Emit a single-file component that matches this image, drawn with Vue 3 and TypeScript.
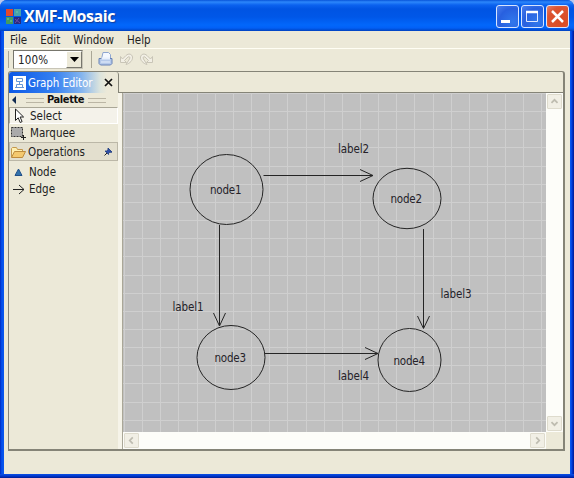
<script setup lang="ts">
interface GraphNode { id: string; cx: number; cy: number; rx: number; ry: number; tx: number; ty: number }
interface GraphEdge { id: string; line: string; head: string; tx: number; ty: number }

const menus: string[] = ['File', 'Edit', 'Window', 'Help']

const step = 18.15
const gridPath: string = [
  ...Array.from({ length: 24 }, (_, i) => `M${Math.round(1 + i * step) + 0.5} 0V339`),
  ...Array.from({ length: 19 }, (_, i) => `M0 ${Math.round(i * step) + 0.5}H423`),
].join('')

// Canvas coordinates; the origin is the top left corner of the drawing area.
const nodes: GraphNode[] = [
  { id: 'node1', cx: 103.5, cy: 96.5, rx: 36.5, ry: 35, tx: 87, ty: 101 },
  { id: 'node2', cx: 284, cy: 105.5, rx: 34, ry: 30.2, tx: 267.5, ty: 110 },
  { id: 'node3', cx: 108, cy: 264.5, rx: 34, ry: 32, tx: 91.5, ty: 269 },
  { id: 'node4', cx: 286.5, cy: 267, rx: 31.5, ry: 31.5, tx: 270.5, ty: 271.5 },
]
const edges: GraphEdge[] = [
  { id: 'label1', line: 'M96.5 132V232', head: 'M90.5 220L96.5 233L102.5 220', tx: 49.5, ty: 218 },
  { id: 'label2', line: 'M140.5 82.5H250', head: 'M237 76.5L250 82.5L237 88.5', tx: 215, ty: 60 },
  { id: 'label3', line: 'M300.5 136V235', head: 'M294.5 223L300.5 235.5L306.5 223', tx: 317.5, ty: 205 },
  { id: 'label4', line: 'M142 260.5H255', head: 'M242 254.5L255 260.5L242 266.5', tx: 215, ty: 287 },
]
</script>

<template>
  <div class="window">
    <header class="titlebar">
      <svg class="app-icon" width="15" height="15" viewBox="0 0 15 15">
        <rect width="7" height="7" fill="#e2482c" />
        <rect x="8" width="7" height="7" fill="#47a3aa" />
        <rect y="8" width="7" height="7" fill="#449b61" />
        <rect x="8" y="8" width="7" height="7" fill="#272a80" />
        <path d="M9 10l5 4M13 9l-4 5" stroke="#6a4fa6" fill="none" />
        <path d="M1 10h2M4 12h2M10 3h2" stroke="#79c7a6" />
      </svg>
      <h1>XMF-Mosaic</h1>
      <div class="controls">
        <button class="ctl"><svg viewBox="0 0 21 21"><path d="M4 15.500h9" stroke="#fff" stroke-width="3" /></svg></button>
        <button class="ctl"><svg viewBox="0 0 21 21"><path d="M4.500 5.500h11v10h-11z" stroke="#dfe9ff" fill="none" /><path d="M4 6h12" stroke="#fff" stroke-width="2.500" /></svg></button>
        <button class="ctl close"><svg viewBox="0 0 21 21"><path d="M5 5l11 11M16 5L5 16" stroke="#fff" stroke-width="2.500" /></svg></button>
      </div>
    </header>

    <div class="body">
      <nav class="menubar"><span v-for="m in menus" :key="m">{{ m }}</span></nav>
      <div class="toolbar">
        <i class="grip"></i>
        <div class="combo"><span>100%</span><b><svg width="9" height="5"><path d="M0 0h9L4.500 5z" /></svg></b></div>
        <i class="grip second"></i>
        <svg class="tools" width="58" height="16" viewBox="0 0 58 16">
          <path d="M3.500 8L5 1.500h5.500l2 2V8" fill="#f4f8ff" stroke="#8fa6d0" />
          <path d="M1 7.500h13v5L12.500 14h-10L1 12.500z" fill="#b5c9ea" stroke="#6681b5" />
          <path d="M3.500 7.500h8.500" stroke="#e8f0fc" stroke-width="2" /><path d="M3 11h9" stroke="#e8f0fc" />
          <path d="M22.500 5.500v6h6l-2-2 3.500-3.500c1.500-1 2.500.5 1.500 2L28 13.500c4-1 7-4.500 6.500-7.500s-4-4-6.500-1.500L24.500 8z" fill="#f2efe5" stroke="#c9c5b7" />
          <path d="M54.500 5.500v6h-6l2-2L47 6c-1.500-1-2.500.5-1.500 2l3.500 5.500c-4-1-7-4.500-6.500-7.500s4-4 6.500-1.500L52.500 8z" fill="#f2efe5" stroke="#c9c5b7" />
        </svg>
      </div>

      <section class="editor">
        <div class="tabs">
          <div class="tab">
            <svg class="tab-icon" width="13" height="14" viewBox="0 0 13 14">
              <rect width="13" height="14" fill="#fff" />
              <path d="M3.500 2.500h6v3h-6zM3.500 8.500h6v3h-6zM6.500 6v2M2 11.500h9" fill="none" stroke="#6798d7" />
            </svg>
            <span class="tab-name">Graph Editor</span>
            <svg class="tab-close" width="9" height="9"><path d="M1 1l7 7M8 1L1 8" stroke="#111" stroke-width="1.700" /></svg>
          </div>
          <div class="tab-rest"></div>
        </div>
        <div class="work">
          <aside class="palette">
            <div class="pal-title">
              <svg width="4" height="8"><path d="M4 0v8L0 4z" fill="#112b51" /></svg>
              <i></i><b>Palette</b><i></i>
            </div>
            <div class="tool selected">
              <svg width="16" height="16"><path d="M4.500 1v11.500l2.700-2.700 2 4.700 1.900-.9-2-4.600h3.500z" fill="#fff" stroke="#222" /></svg><span>Select</span>
            </div>
            <div class="tool">
              <svg width="16" height="16"><rect x=".5" y="2.500" width="11" height="9" fill="#aaa" stroke="#333" stroke-dasharray="2 1" /><path d="M10 12.500h5M12.500 10v5" stroke="#222" /></svg><span>Marquee</span>
            </div>
            <div class="drawer">
              <svg width="15" height="14"><path d="M.5 12V3.500l1-1h4l1 2h5v2" fill="#fff0b0" stroke="#c4984e" /><path d="M.5 12.500L3.500 6.500h11l-3 6z" fill="#f4c96f" stroke="#bd8b3e" /></svg>
              <span>Operations</span>
              <svg class="pin" width="9" height="9"><path d="M4 1l4 4-1 .5-1-.4L4.600 6v1.500L1 4h1.500L4 2.800z" fill="#304fa7" stroke="#1c397c" stroke-width=".8" /><path d="M3 6L.5 8.500" stroke="#222" /></svg>
            </div>
            <div class="entry"><svg width="13" height="12"><path d="M6.500 3L10 9.500H3z" fill="#3273ac" stroke="#214f88" /></svg><span>Node</span></div>
            <div class="entry"><svg width="13" height="12"><path d="M1 6.500h11M7 2l5 4.500L7 11" fill="none" stroke="#222" /></svg><span>Edge</span></div>
          </aside>
          <div class="sash"></div>
          <div class="viewport">
            <svg class="canvas" width="423" height="339" viewBox="0 0 423 339">
              <rect width="423" height="339" fill="#c0c0c0" />
              <path :d="gridPath" stroke="#cfcfcf" />
              <g v-for="e in edges" :key="e.id">
                <path :d="e.line" class="stroke" /><path :d="e.head" class="stroke" />
                <text :x="e.tx" :y="e.ty" textLength="31">{{ e.id }}</text>
              </g>
              <g v-for="n in nodes" :key="n.id">
                <ellipse :cx="n.cx" :cy="n.cy" :rx="n.rx" :ry="n.ry" class="stroke" />
                <text :x="n.tx" :y="n.ty" textLength="31.500">{{ n.id }}</text>
              </g>
            </svg>
            <div class="scroll vertical">
              <i><svg viewBox="0 0 15 15"><path d="M4 9l3.500-3.500L11 9" /></svg></i>
              <i><svg viewBox="0 0 15 15"><path d="M4 6l3.500 3.500L11 6" /></svg></i>
            </div>
            <div class="scroll horizontal">
              <i><svg viewBox="0 0 15 15"><path d="M9 4L5.500 7.500 9 11" /></svg></i>
              <i><svg viewBox="0 0 15 15"><path d="M6 4l3.500 3.500L6 11" /></svg></i>
            </div>
            <div class="corner"></div>
          </div>
        </div>
      </section>
    </div>
  </div>
</template>

<style>
body { margin: 0; background: #b9c8ed; overflow: hidden; }
</style>

<style scoped>
* { box-sizing: border-box; }
svg { display: block; flex: none; }
.window {
  width: 574px; height: 478px; display: flex; flex-direction: column;
  background: linear-gradient(90deg, #0020b8 0, #0047e5 1px, #0855ee 3px, #0855ee 571px, #0038d7 572px, #001b91 574px);
  border-radius: 7px 7px 0 0; overflow: hidden;
  font: 11.500px "DejaVu Sans Condensed", "DejaVu Sans", sans-serif; font-stretch: condensed; color: #222;
}
.window::after { content: ""; flex: 1; background: linear-gradient(#0b50e4, #0038cf 50%, #001b91); }
.titlebar {
  height: 31px; flex: none; display: flex; align-items: center; padding: 1px 5px 0 6px;
  background: linear-gradient(#0754d9 0, #2c87fb 2px, #0b62ef 5px, #0054e3 9px, #0057e8 17px, #0267fb 25px, #0260f6 28px, #0041bf 31px);
}
h1 { margin: 0 0 0 3px; font: 700 16px "Open Sans", sans-serif; letter-spacing: -.45px; color: #fff; text-shadow: 1px 1px 1px #123e9c; }
.controls { margin-left: auto; display: flex; gap: 2px; }
.ctl { width: 23px; height: 23px; padding: 0; border: 1px solid #d8e5ff; border-radius: 3px; background: radial-gradient(circle at 75% 75%, #3178ec, #2860df 60%, #4b80ee); }
.ctl svg { width: 21px; height: 21px; }
.ctl.close { background: radial-gradient(circle at 70% 70%, #d94b22, #dc5431 65%, #e7826a); }
.body { height: 443px; flex: none; margin: 0 4px; background: #ece9d8; }
.menubar { height: 18px; display: flex; gap: 13px; padding-left: 6px; line-height: 18px; border-bottom: 1px solid #fffef4; }
.toolbar { height: 22px; display: flex; align-items: center; padding: 0 0 2px 3px; }
.grip { width: 2px; height: 17px; border-right: 1px solid #aaa797; }
.combo { margin-left: 4px; width: 70px; height: 19px; display: flex; background: #fff; border: 1px solid #77766d; border-right-color: #c8c5b7; border-bottom-color: #c8c5b7; }
.combo span { width: 52px; padding-left: 4px; line-height: 18px; letter-spacing: .15px; }
.combo b { flex: 1; display: flex; align-items: center; justify-content: center; background: #ece9d8; border: 1px solid; border-color: #fff #77766d #77766d #fff; }
.second { margin-left: 7px; }
.tools { margin-left: 6px; }
.editor { width: 557px; height: 380px; margin-left: 4px; border: 1px solid #858477; border-right-width: 2px; border-bottom-width: 2px; border-radius: 3px 3px 0 0; }
.tabs { height: 21px; display: flex; }
.tab { width: 110px; border-right: 1px solid #858477; border-radius: 3px 3px 0 0; display: flex; align-items: center; padding-left: 4px; background: linear-gradient(90deg, #0b58e6 0, #3580f1 45px, #81b3ef 72px, #dce4dd 91px, #ece9d8 98px); }
.tab-name { width: 64px; margin-left: 2px; color: #fff; white-space: nowrap; letter-spacing: -.1px; }
.tab-close { margin-left: 12px; }
.tab-rest { flex: 1; border-bottom: 1px solid #858477; }
.work { height: 356px; display: flex; }
.palette { width: 109px; }
.pal-title { height: 14px; display: flex; align-items: center; padding-left: 3px; color: #111; font-size: 11px; line-height: 12px; }
.pal-title i { width: 18px; height: 5px; border: solid #bbb6a5; border-width: 1px 0; margin-left: 10px; }
.pal-title b { margin: 0 -6px 0 3px; letter-spacing: -.4px; }
.tool { height: 17px; display: flex; align-items: center; gap: 3px; padding-left: 2px; }
.tool.selected { background: #f4f2ea; border: 1px solid #aaa797; border-right-color: #fff; border-bottom-color: #fff; padding-left: 1px; }
.drawer { height: 19px; margin-top: 1px; display: flex; align-items: center; gap: 2px; padding-left: 1px; background: #e3dfce; border: 1px solid #bbb7a7; }
.pin { margin-left: auto; margin-right: 4px; }
.entry { height: 17px; display: flex; align-items: center; gap: 4px; padding-left: 3px; }
.drawer + .entry { margin-top: 2px; }
.sash { width: 5px; background: #f6f4e9; border-right: 1px solid #aaa797; }
.viewport { display: grid; grid-template-columns: 423px 17px; grid-template-rows: 339px 17px; }
.canvas { font-size: 11.500px; fill: #252229; }
.stroke { fill: none; stroke: #252525; }
.scroll { display: flex; justify-content: space-between; background: #fdfdf9; padding: 1px; }
.vertical { flex-direction: column; }
.scroll i { width: 15px; height: 15px; border: 1px solid #dedbcd; border-radius: 1px; background: #f1efe5; }
.scroll svg { width: 13px; height: 13px; fill: none; stroke: #bebcb0; stroke-width: 2; }
.corner { background: #ece9d8; }
</style>
